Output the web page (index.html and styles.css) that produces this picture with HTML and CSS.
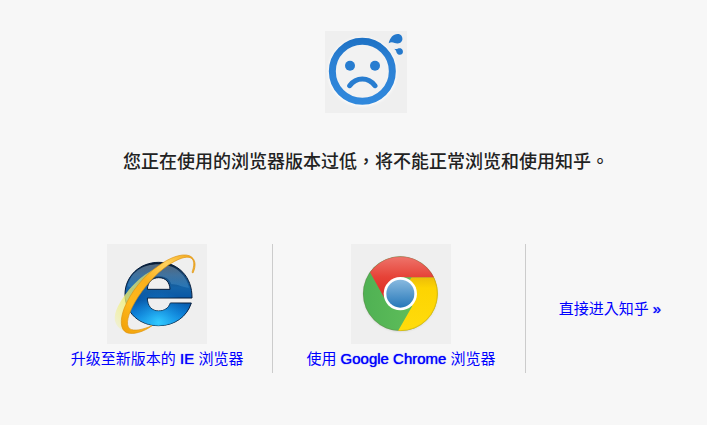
FILE: index.html
```html
<!DOCTYPE html>
<html lang="zh-TW">
<head>
<meta charset="utf-8">
<meta name="viewport" content="width=device-width, initial-scale=1">
<title>知乎</title>
<link rel="stylesheet" href="styles.css">
</head>
<body>
<main class="page">
  <svg class="face" viewBox="30 33 246 246" aria-hidden="true">
    <defs>
      <linearGradient id="faceBlue" x1="0" y1="0" x2="0" y2="1">
        <stop offset="0" stop-color="#1f73c6"/>
        <stop offset=".3" stop-color="#2a7fd3"/>
        <stop offset="1" stop-color="#3088dc"/>
      </linearGradient>
      <filter id="glow" x="-20%" y="-20%" width="140%" height="140%"><feGaussianBlur stdDeviation="4"/></filter>
    </defs>
    <rect x="30" y="33" width="246" height="246" fill="#efefef"/>
    <circle cx="142" cy="156" r="92" fill="none" stroke="#fff" stroke-width="20" filter="url(#glow)"/>
    <circle cx="142" cy="154" r="84" fill="#f2f2f2"/>
    <circle cx="142" cy="154" r="90" fill="none" stroke="url(#faceBlue)" stroke-width="21"/>
    <circle cx="105" cy="137" r="15" fill="#287dd0"/>
    <circle cx="180" cy="137" r="15" fill="#287dd0"/>
    <path d="M104 197Q119 177 142 177T180 197" fill="none" stroke="#287dd0" stroke-width="15" stroke-linecap="round"/>
    <path d="M221 70C225 53 234 42 248 42C258 42 264 50 262 60C259 71 247 72 239 69C232 66 227 66 221 70Z" fill="#2579cc"/>
    <path d="M237 86C246 89 249 83 257 85C264 88 266 96 262 101C257 107 247 104 245 98C243 91 242 89 237 86Z" fill="#2579cc"/>
  </svg>
  <h1 class="message">您正在使用的浏览器版本过低，将不能正常浏览和使用知乎。</h1>
  <nav class="choices">
    <div class="choice">
      <a class="link" href="#ie">
        <svg class="logo" viewBox="18 18 300 300" aria-hidden="true">
          <defs>
            <linearGradient id="ieBlue" x1="0" y1="0" x2="0" y2="1">
              <stop offset="0" stop-color="#07182d"/>
              <stop offset=".2" stop-color="#174a7b"/>
              <stop offset=".4" stop-color="#1463a8"/>
              <stop offset=".6" stop-color="#0755a5"/>
              <stop offset=".82" stop-color="#0878d2"/>
              <stop offset="1" stop-color="#19a9f5"/>
            </linearGradient>
            <radialGradient id="ieShine" cx=".5" cy=".95" r=".5">
              <stop offset="0" stop-color="#32cbff"/>
              <stop offset="1" stop-color="#1588df" stop-opacity="0"/>
            </radialGradient>
            <linearGradient id="ieTop" x1="0" y1="0" x2="0" y2="1">
              <stop offset="0" stop-color="#c4d5e4" stop-opacity=".4"/>
              <stop offset="1" stop-color="#5aaee8" stop-opacity=".25"/>
            </linearGradient>
            <linearGradient id="ring" x1="0" y1="1" x2="1" y2="0">
              <stop offset="0" stop-color="#ef9f08"/>
              <stop offset=".25" stop-color="#ffb81c"/>
              <stop offset=".5" stop-color="#fbb01b"/>
              <stop offset=".75" stop-color="#ffd15c"/>
              <stop offset="1" stop-color="#f3a413"/>
            </linearGradient>
            <linearGradient id="haze" x1="0" y1="1" x2="1" y2="0">
              <stop offset="0" stop-color="#f4f35f" stop-opacity=".1"/>
              <stop offset=".4" stop-color="#f1ef70" stop-opacity=".8"/>
              <stop offset="1" stop-color="#c0d070" stop-opacity=".7"/>
            </linearGradient>
          </defs>
          <rect x="18" y="18" width="300" height="300" fill="#efefef"/>
          <path d="M273 180C274 117 232 73 173 73C115 73 72 116 72 169C72 225 116 263 173 263C221 263 258 236 271 195L208 195C203 210 190 219 173 219C152 219 139 204 139 180ZM139 154C140 132 153 119 173 119C194 119 206 132 207 154Z" fill="url(#ieBlue)" stroke="#061c3a" stroke-width="3" fill-rule="evenodd"/>
          <path d="M273 180C274 117 232 73 173 73C115 73 72 116 72 169C72 225 116 263 173 263C221 263 258 236 271 195L208 195C203 210 190 219 173 219C152 219 139 204 139 180ZM139 154C140 132 153 119 173 119C194 119 206 132 207 154Z" fill="url(#ieShine)" fill-rule="evenodd"/>
          <path d="M80 145C88 104 124 79 173 79C219 79 254 106 264 149C242 149 231 137 211 139C206 123 193 115 173 115C153 115 138 126 134 147C115 154 97 152 80 145Z" fill="url(#ieTop)"/>
          <path d="M166 91C119 111 75 158 51 205C36 235 36 262 67 278C61 244 82 198 110 159C126 136 144 116 166 91Z" fill="url(#haze)"/>
          <path d="M276 105C286 83 285 62 265 53C241 45 204 60 173 83C128 113 89 162 70 210C56 246 58 275 77 284C96 291 128 282 153 263C126 275 98 281 86 272C72 260 82 227 102 192C126 151 164 107 201 82C228 64 256 52 270 60C282 68 279 85 273 103Z" fill="url(#ring)" stroke="#dc9212" stroke-width="2"/>
        </svg>
        <span>升级至新版本的 <span class="latin">IE</span> 浏览器</span>
      </a>
    </div>
    <div class="choice">
      <a class="link" href="#chrome">
        <svg class="logo" viewBox="18 18 300 300" aria-hidden="true">
          <defs>
            <linearGradient id="red" x1="0" y1="0" x2="0" y2="1">
              <stop offset="0" stop-color="#ee746b"/>
              <stop offset=".5" stop-color="#e64237"/>
              <stop offset="1" stop-color="#dc2b24"/>
            </linearGradient>
            <linearGradient id="green" x1="0" y1="0" x2="1" y2="0">
              <stop offset="0" stop-color="#4fb153"/>
              <stop offset="1" stop-color="#66c35e"/>
            </linearGradient>
            <linearGradient id="yellow" x1="0" y1="0" x2="0" y2="1">
              <stop offset="0" stop-color="#edbd08"/>
              <stop offset=".2" stop-color="#fdd402"/>
              <stop offset="1" stop-color="#ffdc0c"/>
            </linearGradient>
            <linearGradient id="core" x1="0" y1="0" x2="0" y2="1">
              <stop offset="0" stop-color="#88b9df"/>
              <stop offset="1" stop-color="#2678b9"/>
            </linearGradient>
            <filter id="drop"><feGaussianBlur stdDeviation="3"/></filter>
          </defs>
          <rect x="18" y="18" width="300" height="300" fill="#efefef"/>
          <circle cx="166" cy="169" r="111" fill="#ccc" filter="url(#drop)"/>
          <circle cx="166" cy="167" r="112" fill="url(#green)"/>
          <path d="M166 167L200 118H267A112 112 0 0 1 159 279L202 204Z" fill="url(#yellow)"/>
          <path d="M75 103A112 112 0 0 1 267 118H166L118 180Z" fill="url(#red)"/>
          <circle cx="166" cy="167" r="111" fill="none" stroke="#704f32" stroke-opacity=".3" stroke-width="2"/>
          <circle cx="166" cy="167" r="50" fill="#fff"/>
          <circle cx="166" cy="167" r="42" fill="url(#core)"/>
        </svg>
        <span>使用 <span class="latin">Google Chrome</span> 浏览器</span>
      </a>
    </div>
    <div class="choice">
      <a class="link" href="#enter"><span>直接进入知乎 <span class="latin">»</span></span></a>
    </div>
  </nav>
</main>
</body>
</html>
```
FILE: styles.css
```css
body {
  margin: 0;
  background: #f7f7f7;
  color: #222;
  font-family: "Liberation Sans", "Noto Sans CJK TC", sans-serif;
}

.page {
  display: flex;
  flex-direction: column;
  align-items: center;
  padding: 31px 0 0 25px;
}

.face {
  display: block;
  width: 82px;
  height: 82px;
}

.message {
  margin: 34px 0 70px;
  font-family: "Noto Sans CJK TC", sans-serif;
  font-size: 18px;
  font-weight: 500;
  line-height: 27px;
}

.choices {
  display: flex;
  justify-content: center;
  margin-right: 4px;
}

.choice {
  display: flex;
  align-items: center;
  padding: 0 29px 0 33px;
}

.choice + .choice {
  border-left: 1px solid #ccc;
}

.link {
  display: flex;
  flex-direction: column;
  align-items: center;
  color: #00f;
  font-size: 15px;
  line-height: 29px;
  text-decoration: none;
}

.latin {
  text-shadow: 0 0 1px #00f;
}

.logo {
  display: block;
  width: 100px;
  height: 100px;
}
```
